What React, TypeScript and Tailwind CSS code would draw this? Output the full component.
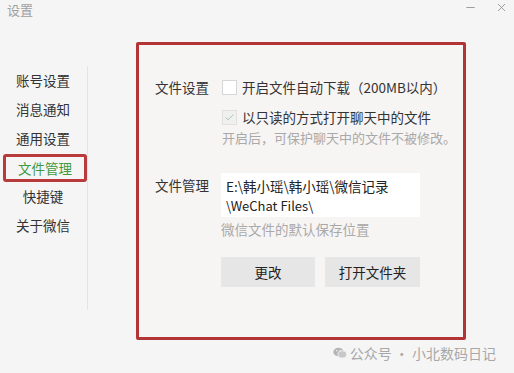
import { X, Minus, Check } from 'lucide-react';

const menu = ['账号设置', '消息通知', '通用设置', '文件管理', '快捷键', '关于微信'];

function WechatGlyph() {
  return (
    <svg width="14" height="12" viewBox="0 0 14 12" className="mr-[3px]">
      <ellipse cx="5.5" cy="5" rx="5.2" ry="4.3" fill="#b5b5b5" />
      <ellipse cx="9.3" cy="7.4" rx="4.4" ry="3.6" fill="#c8c8c8" stroke="#f5f5f5" strokeWidth="0.8" />
      <circle cx="3.8" cy="3.8" r="0.7" fill="#f5f5f5" />
      <circle cx="7" cy="3.8" r="0.7" fill="#f5f5f5" />
    </svg>
  );
}

export default function App() {
  return (
    <div
      className="relative w-[514px] h-[373px] overflow-hidden bg-[#f5f5f5] text-[#333] text-[13.5px]"
      style={{ fontFamily: '"Noto Sans CJK SC", "Noto Sans", sans-serif' }}
    >
      {/* title bar */}
      <div className="flex h-[24px] items-start justify-between">
        <span className="pl-[7px] pt-[1px] text-[13px] leading-[18px] text-[#a0a0a0]">设置</span>
        <div className="flex items-center gap-[18px] pr-[6px] pt-[1px] text-[#8a8a8a]">
          <Minus size={13} strokeWidth={1.5} />
          <X size={13} strokeWidth={1.5} />
        </div>
      </div>

      <div className="flex">
        {/* sidebar */}
        <div className="w-[88px] pt-[42px]">
          <div className="border-r border-[#e4e4e4] pb-[70px]">
            {menu.map((item) =>
              item === '文件管理' ? (
                <div key={item} className="flex h-[29px] items-center">
                  <div className="ml-[3px] mt-[1px] flex h-[28px] w-[84px] items-center justify-center rounded-[3px] border-[3px] border-[#b83a3a] text-[#3f9a3f]">
                    {item}
                  </div>
                </div>
              ) : (
                <div key={item} className="flex h-[29px] w-[86px] items-center justify-center">
                  {item}
                </div>
              )
            )}
          </div>
        </div>

        {/* main */}
        <div className="pl-[48px] pt-[18px]">
          <div className="h-[298px] w-[330px] rounded-[2px] border-[3px] border-[#b23434] bg-[#f7f4f4] pl-[16px] pt-[34px]">
            <div className="flex">
              <div className="w-[67px] shrink-0 leading-[16px]">文件设置</div>
              <div className="flex flex-col whitespace-nowrap">
                <div className="flex h-[16px] items-center">
                  <div className="h-[15px] w-[15px] border border-[#d6d6d6] bg-white" />
                  <span className="ml-[5px] leading-[16px]">开启文件自动下载（200MB以内）</span>
                </div>
                <div className="mt-[14px] flex h-[16px] items-center">
                  <div className="flex h-[15px] w-[15px] items-center justify-center border border-[#e0e0e0] bg-[#f0f0f0] text-[#8fb08f]">
                    <Check size={11} strokeWidth={1.6} />
                  </div>
                  <span className="ml-[5px] leading-[16px]">以只读的方式打开聊天中的文件</span>
                </div>
                <div className="mt-[4px] text-[13px] leading-[18px] text-[#a9a9a9]">开启后，可保护聊天中的文件不被修改。</div>
              </div>
            </div>

            <div className="mt-[26px] flex">
              <div className="w-[66px] shrink-0 pt-[4px] leading-[16px]">文件管理</div>
              <div className="flex flex-col">
                <div className="h-[44px] w-[199px] whitespace-nowrap bg-white pl-[5px] pt-[4px] text-[13.5px] leading-[19px] text-[#222]">
                  <div>E:\韩小瑶\韩小瑶\微信记录</div>
                  <div className="text-[13px]">\WeChat Files\</div>
                </div>
                <div className="mt-[3px] whitespace-nowrap leading-[18px] text-[#a9a9a9]">微信文件的默认保存位置</div>
                <div className="mt-[19px] flex gap-[10px]">
                  <button className="flex h-[30px] w-[94px] items-center justify-center bg-[#e6e6e6] text-[#222]">更改</button>
                  <button className="flex h-[30px] w-[95px] items-center justify-center bg-[#e6e6e6] text-[#222]">打开文件夹</button>
                </div>
              </div>
            </div>
          </div>
        </div>
      </div>

      {/* watermark */}
      <div className="absolute bottom-[12px] right-[18px] flex items-center text-[14px] leading-[16px] text-[#a8a8a8]">
        <WechatGlyph />
        <span>公众号 · 小北数码日记</span>
      </div>
    </div>
  );
}
